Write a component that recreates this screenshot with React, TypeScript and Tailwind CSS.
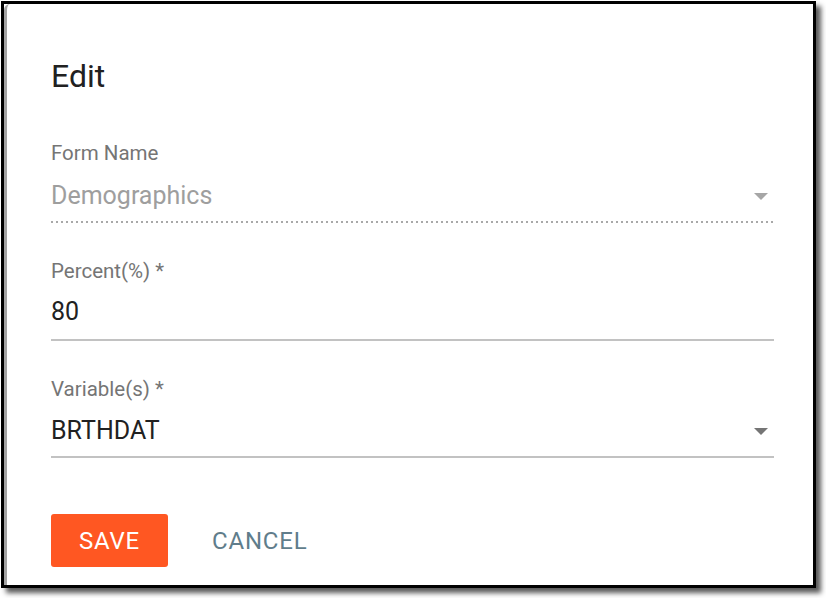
import React from 'react';

const font = { fontFamily: 'Roboto, "Liberation Sans", sans-serif' };

const Caret = ({ color }: { color: string }) => (
  <svg width="14" height="7" viewBox="0 0 14 7" className="shrink-0">
    <polygon points="0,0 14,0 7,7" fill={color} />
  </svg>
);

export default function App() {
  return (
    <div className="w-[826px] h-[598px] bg-white overflow-hidden" style={font}>
      {/* Dialog frame */}
      <div className="ml-[1px] mt-[1px] w-[815px] h-[587px] border-[3px] border-black bg-white shadow-[5px_5px_5px_rgba(0,0,0,0.65)]">
        <div className="h-full border-l-[3px] border-[#a3a3a3] rounded-tl-[6px] bg-white pl-[44px] pr-[39px] flex flex-col">
          {/* Title */}
          <h2 className="mt-[52px] text-[32px] leading-[40px] text-[#212121] font-normal">Edit</h2>

          {/* Form Name (disabled select) */}
          <div className="mt-[45px] text-[20.5px] leading-[24px] text-[#757575]">Form Name</div>
          <div className="mt-[16px] flex items-center justify-between">
            <span className="text-[25px] leading-[30px] text-[#9e9e9e]">Demographics</span>
            <span className="mr-[6px]">
              <Caret color="#a6a6a6" />
            </span>
          </div>
          <div className="mt-[10px] h-[2px] bg-[linear-gradient(to_right,#a8a8a8_50%,transparent_50%)] bg-[length:5px_2px]" />

          {/* Percent */}
          <div className="mt-[36px] text-[20.5px] leading-[24px] text-[#757575]">Percent(%) *</div>
          <div className="mt-[14px] text-[25px] leading-[30px] text-[#212121]">80</div>
          <div className="mt-[12px] h-[2px] bg-[#c2c2c2]" />

          {/* Variables */}
          <div className="mt-[36px] text-[20.5px] leading-[24px] text-[#757575]">Variable(s) *</div>
          <div className="mt-[15px] flex items-center justify-between">
            <span className="text-[25px] leading-[30px] text-[#212121]">BRTHDAT</span>
            <span className="mr-[6px]">
              <Caret color="#757575" />
            </span>
          </div>
          <div className="mt-[10px] h-[2px] bg-[#c2c2c2]" />

          {/* Actions */}
          <div className="mt-[56px] flex items-center gap-[44px]">
            <button className="w-[117px] h-[53px] rounded-[3px] bg-[#ff5722] text-white text-[24px] font-normal tracking-[0.8px]">
              SAVE
            </button>
            <button className="text-[24px] font-normal text-[#607d8b] tracking-[0.8px]">CANCEL</button>
          </div>
        </div>
      </div>
    </div>
  );
}
